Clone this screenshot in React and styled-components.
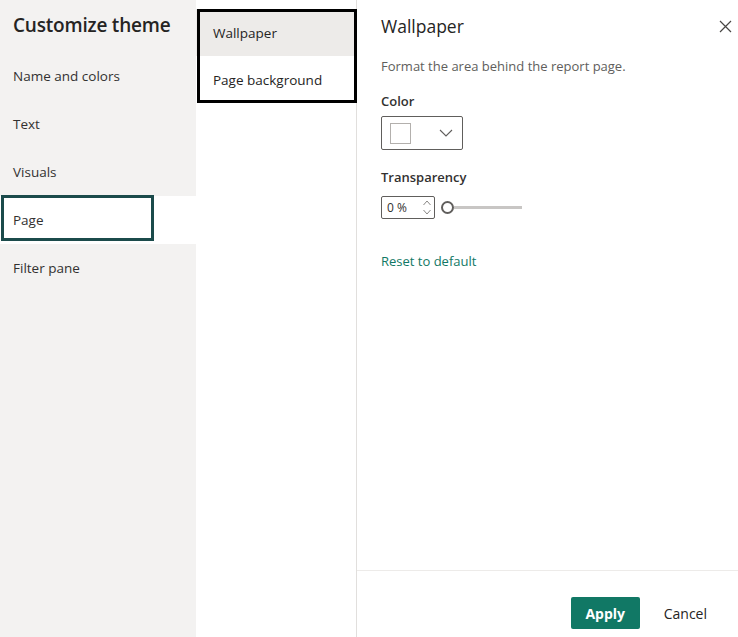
import React from 'react';
import styled, {createGlobalStyle, css} from 'styled-components';

const GlobalStyle = createGlobalStyle`
    html, body {
        margin: 0;
        padding: 0;
        background: #ffffff;
    }
    body {
        font-family: "Open Sans", "Noto Sans", "Liberation Sans", sans-serif;
        color: #252423;
    }
`

const Layout = styled.div`
    display: grid;
    grid-template-columns: 196px 161px 1fr;
    width: 738px;
    height: 637px;
    overflow: hidden;
`

const LeftPane = styled.div`
    background: #f3f2f1;
    display: flex;
    flex-direction: column;
`

const PaneTitle = styled.h1`
    margin: 0;
    padding: 12px 13px 0;
    height: 52px;
    box-sizing: border-box;
    font-size: 19px;
    font-weight: 600;
    color: #252423;
    letter-spacing: -0.2px;
`

const NavItem = styled.div`
    position: relative;
    height: 48px;
    display: flex;
    align-items: center;
    padding-left: 13px;
    font-size: 13.5px;
    color: #323130;
    ${props => props.selected && css`
        background: #ffffff;
        &::after {
            content: '';
            position: absolute;
            left: 1px;
            top: -1px;
            width: 153px;
            height: 46px;
            box-sizing: border-box;
            border: 3px solid #1b4b4b;
        }
    `}
`

const MiddlePane = styled.div`
    background: #ffffff;
    border-right: 1px solid #e1dfdd;
    padding-top: 9px;
`

const SubNav = styled.div`
    position: relative;
    &::after {
        content: '';
        position: absolute;
        left: 1px;
        right: -1px;
        top: 0;
        bottom: 0;
        border: 3px solid #000000;
        pointer-events: none;
    }
`

const SubItem = styled.div`
    height: 47px;
    display: flex;
    align-items: center;
    padding-left: 17px;
    font-size: 13.5px;
    color: #252423;
    ${props => props.selected && css`
        background: #edebe9;
        font-weight: 500;
    `}
`

const RightPane = styled.div`
    display: flex;
    flex-direction: column;
`

const Content = styled.div`
    flex: 1;
    padding: 12px 24px 0;
    display: flex;
    flex-direction: column;
`

const Header = styled.div`
    display: flex;
    justify-content: space-between;
    align-items: center;
    height: 28px;
`

const Title = styled.h2`
    margin: 0;
    font-size: 17.5px;
    font-weight: 500;
    color: #252423;
`

const CloseButton = styled.button`
    border: none;
    background: none;
    padding: 0;
    margin-right: -18px;
    display: flex;
    color: #484644;
`

const Description = styled.p`
    margin: 17px 0 0;
    font-size: 13px;
    color: #605e5c;
`

const Label = styled.div`
    margin-top: ${props => props.gap || 12}px;
    font-size: 13px;
    font-weight: 600;
    color: #323130;
`

const ColorPicker = styled.div`
    margin-top: 6px;
    width: 82px;
    height: 34px;
    box-sizing: border-box;
    border: 1px solid #605e5c;
    border-radius: 2px;
    display: flex;
    align-items: center;
    justify-content: space-between;
    padding: 0 9px 0 8px;
`

const Swatch = styled.div`
    width: 21px;
    height: 21px;
    box-sizing: border-box;
    border: 1px solid #b3b0ad;
    background: #ffffff;
`

const SliderRow = styled.div`
    margin-top: 10px;
    display: flex;
    align-items: center;
`

const SpinInput = styled.div`
    width: 54px;
    height: 23px;
    box-sizing: border-box;
    border: 1px solid #605e5c;
    border-radius: 2px;
    display: flex;
    align-items: center;
    justify-content: space-between;
    padding: 0 2px 0 5px;
    font-size: 12px;
    color: #323130;
`

const Slider = styled.div`
    display: flex;
    align-items: center;
    margin-left: 6px;
`

const Thumb = styled.div`
    width: 13px;
    height: 13px;
    box-sizing: border-box;
    border: 2px solid #605e5c;
    border-radius: 50%;
    background: #ffffff;
`

const Track = styled.div`
    width: 68px;
    height: 3px;
    background: #c8c6c4;
`

const ResetLink = styled.a`
    margin-top: 33px;
    font-size: 13px;
    color: #117865;
    text-decoration: none;
`

const Footer = styled.div`
    height: 67px;
    box-sizing: border-box;
    border-top: 1px solid #edebe9;
    display: flex;
    align-items: flex-start;
    justify-content: flex-end;
    padding: 26px 31px 0 0;
    gap: 24px;
`

const Button = styled.button`
    font-family: inherit;
    font-size: 14px;
    border: none;
    border-radius: 2px;
    height: 32px;
    padding: 0;
    background: transparent;
    color: #252423;
    ${props => props.primary && css`
        background: #117865;
        color: #ffffff;
        font-weight: 700;
        width: 69px;
    `}
`

function Chevron() {
    return (
        <svg width="14" height="8" viewBox="0 0 14 8" fill="none">
            <path d="M1 1l6 6 6-6" stroke="#605e5c" strokeWidth="1.1"/>
        </svg>
    )
}

function SpinArrows() {
    return (
        <svg width="10" height="19" viewBox="0 0 10 19" fill="none">
            <path d="M1.5 7L5 3l3.5 4" stroke="#8a8886" strokeWidth="1"/>
            <path d="M1.5 12L5 16l3.5-4" stroke="#8a8886" strokeWidth="1"/>
        </svg>
    )
}

function CloseIcon() {
    return (
        <svg width="13" height="13" viewBox="0 0 13 13" fill="none">
            <path d="M1 1l11 11M12 1L1 12" stroke="#484644" strokeWidth="1.2"/>
        </svg>
    )
}

const navItems = ['Name and colors', 'Text', 'Visuals', 'Page', 'Filter pane'];

export default function App() {
    return (
        <>
            <GlobalStyle/>
            <Layout>
                <LeftPane>
                    <PaneTitle>Customize theme</PaneTitle>
                    {navItems.map(item =>
                        <NavItem key={item} selected={item === 'Page'}>{item}</NavItem>
                    )}
                </LeftPane>
                <MiddlePane>
                    <SubNav>
                        <SubItem selected>Wallpaper</SubItem>
                        <SubItem>Page background</SubItem>
                    </SubNav>
                </MiddlePane>
                <RightPane>
                    <Content>
                        <Header>
                            <Title>Wallpaper</Title>
                            <CloseButton aria-label="Close"><CloseIcon/></CloseButton>
                        </Header>
                        <Description>Format the area behind the report page.</Description>
                        <Label gap={17}>Color</Label>
                        <ColorPicker>
                            <Swatch/>
                            <Chevron/>
                        </ColorPicker>
                        <Label gap={18}>Transparency</Label>
                        <SliderRow>
                            <SpinInput>
                                <span>0 %</span>
                                <SpinArrows/>
                            </SpinInput>
                            <Slider>
                                <Thumb/>
                                <Track/>
                            </Slider>
                        </SliderRow>
                        <ResetLink href="#">Reset to default</ResetLink>
                    </Content>
                    <Footer>
                        <Button primary>Apply</Button>
                        <Button>Cancel</Button>
                    </Footer>
                </RightPane>
            </Layout>
        </>
    )
}
